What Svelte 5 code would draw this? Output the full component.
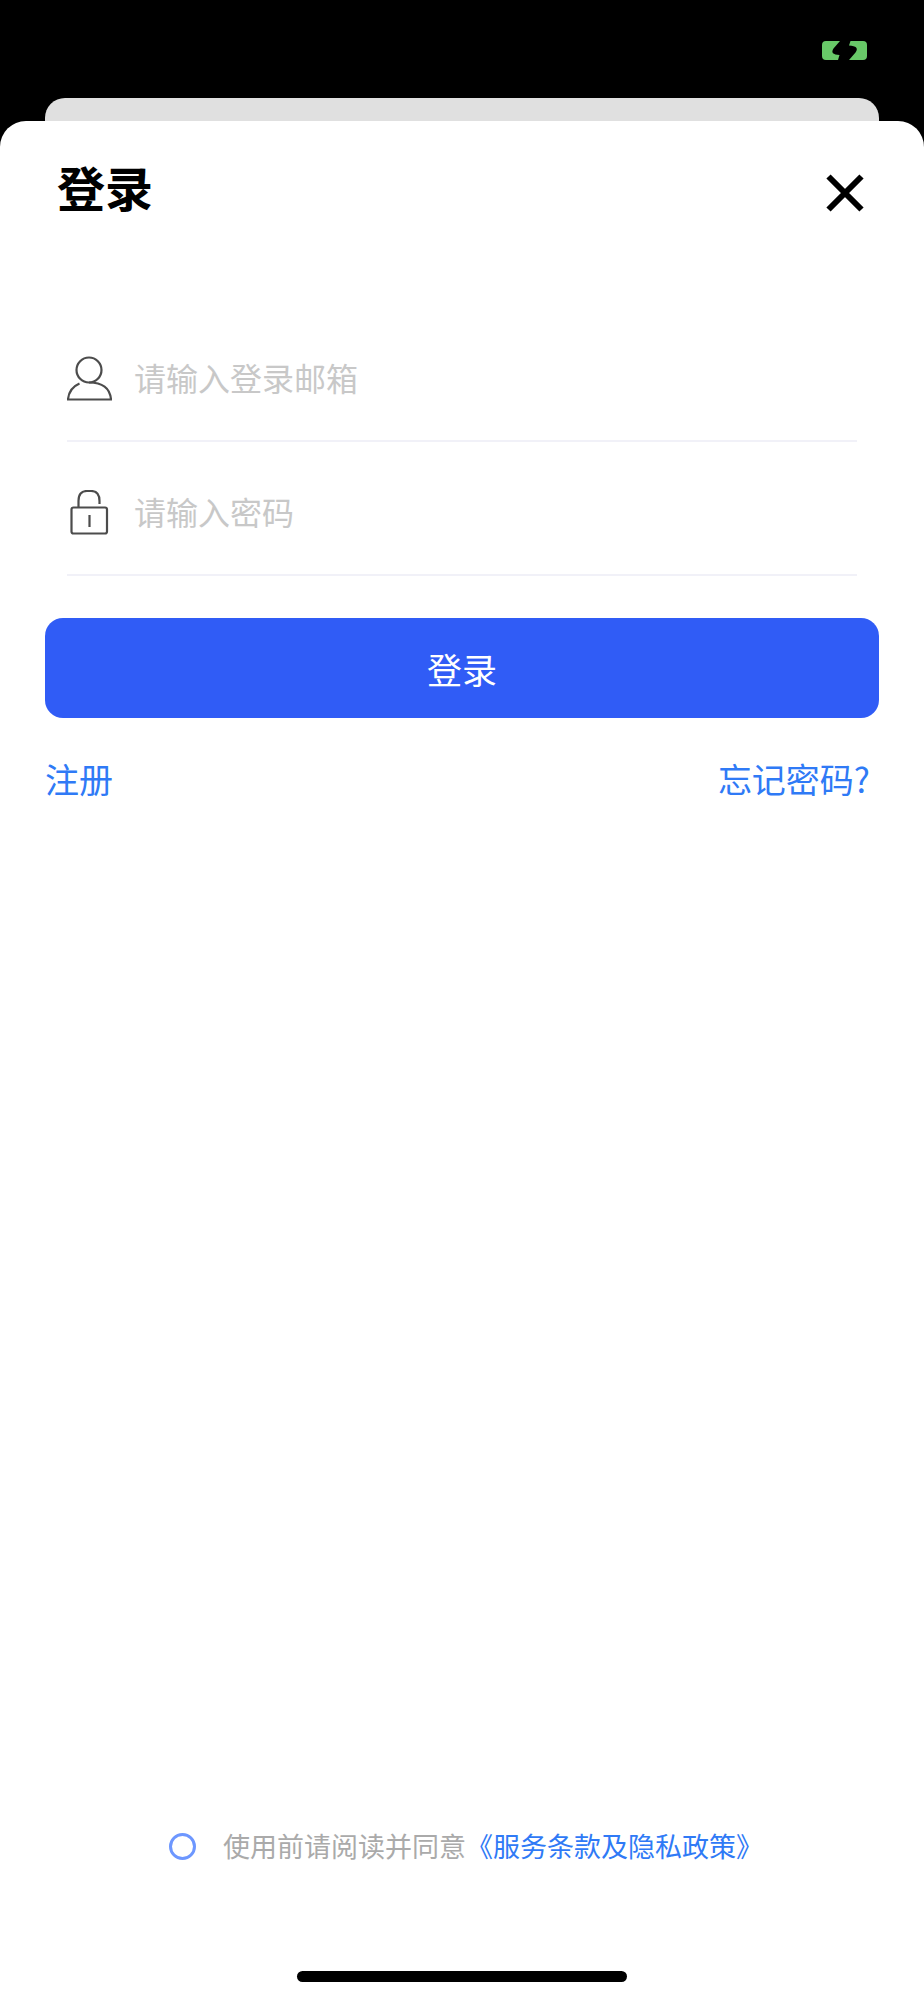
<!-- src/Login.svelte -->

<script>
  let email = '';
  let password = '';
  let agreed = false;

  function handleLogin() {
    if (!agreed) return;
    password = '';
  }
</script>

<div class="screen">
  <div class="status-bar">
    <!-- charging battery -->
    <svg class="battery" viewBox="0 0 45 19" aria-hidden="true">
      <path d="M4 0H18L11.500 7.500Q7.500 13.500 17.500 14L16 19H4Q0 19 0 15V4Q0 0 4 0Z" />
      <path d="M28.500 0H41Q45 0 45 4V15Q45 19 41 19H27L33.500 11.500Q38 5 27 4.500Z" />
    </svg>
  </div>

  <div class="back-sheet"></div>

  <main class="sheet">
    <header>
      <h1>登录</h1>
      <button class="close" type="button" aria-label="关闭">
        <svg viewBox="0 0 38 38" aria-hidden="true">
          <path d="M2.500 2.500L35.500 35.500M35.500 2.500L2.500 35.500" />
        </svg>
      </button>
    </header>

    <form on:submit|preventDefault={handleLogin}>
      <div class="field">
        <label for="email" aria-label="登录邮箱">
          <svg viewBox="0 0 45 45" aria-hidden="true">
            <circle cx="22" cy="14" r="12.500" />
            <path d="M12.500 27.500Q2 32 1 43.500H44C43 32 35 26.500 22 26.500" />
          </svg>
        </label>
        <input id="email" type="email" placeholder="请输入登录邮箱" bind:value={email} />
      </div>

      <div class="field">
        <label for="password" aria-label="密码">
          <svg viewBox="0 0 45 45" aria-hidden="true">
            <rect x="4.500" y="17.500" width="35.500" height="26" rx="2" />
            <path d="M11.500 17.500V11Q11.500 1 20 1H24Q32.500 1 32.500 11V14M22.500 25V37" />
          </svg>
        </label>
        <input id="password" type="password" placeholder="请输入密码" bind:value={password} />
      </div>

      <button class="submit" type="submit">登录</button>
    </form>

    <nav>
      <a href="#register">注册</a>
      <a href="#forgot">忘记密码?</a>
    </nav>

    <footer>
      <div class="agreement">
        <input id="agree" type="checkbox" bind:checked={agreed} />
        <p><label for="agree">使用前请阅读并同意</label><a href="#terms">《服务条款及隐私政策》</a></p>
      </div>
      <div class="home-bar"></div>
    </footer>
  </main>
</div>

<style>
  :global(body) {
    background: #000;
  }

  .screen {
    display: flex;
    flex-direction: column;
    min-height: 100vh;
    background: #000;
    font-family: "Noto Sans CJK SC", sans-serif;
  }

  .status-bar {
    display: flex;
    justify-content: flex-end;
    height: 98px;
    padding: 41px 57px 0;
    box-sizing: border-box;
  }

  .battery {
    width: 45px;
    height: 19px;
    fill: #68c968;
  }

  .back-sheet {
    height: 23px;
    margin: 0 45px;
    background: #e0e0e0;
    border-radius: 20px 20px 0 0;
  }

  .sheet {
    flex: 1;
    display: flex;
    flex-direction: column;
    background: #fff;
    border-radius: 26px 26px 0 0;
  }

  header {
    display: flex;
    justify-content: space-between;
    align-items: center;
    padding: 29px 57px 0;
  }

  h1 {
    margin: 0;
    font-size: 48px;
    line-height: 72px;
    font-weight: 700;
    color: #000;
  }

  button {
    border: none;
    font-family: inherit;
    cursor: pointer;
  }

  .close {
    display: flex;
    padding: 14px 0 0;
    background: none;
  }

  .close svg {
    width: 44px;
    height: 38px;
    fill: none;
    stroke: #000;
    stroke-width: 6;
  }

  form {
    padding: 86px 45px 0;
  }

  .field {
    display: flex;
    align-items: center;
    gap: 22px;
    height: 134px;
    margin: 0 22px;
    padding-top: 8px;
    box-sizing: border-box;
    border-bottom: 2px solid #f1f1f8;
  }

  .field label {
    display: flex;
  }

  .field svg {
    width: 45px;
    height: 45px;
    fill: none;
    stroke: #4c4c4c;
    stroke-width: 2.2;
  }

  .field input {
    flex: 1;
    min-width: 0;
    padding: 0 0 2px;
    border: none;
    outline: none;
    background: none;
    font-family: inherit;
    font-size: 32px;
    line-height: 48px;
    color: #333;
  }

  .field input::placeholder {
    color: #c8c8c8;
    opacity: 1;
  }

  .submit {
    width: 100%;
    height: 100px;
    margin-top: 42px;
    padding: 0;
    border-radius: 18px;
    background: #305cf6;
    color: #fff;
    font-size: 35px;
  }

  nav {
    display: flex;
    justify-content: space-between;
    padding: 36px 54px 0 45px;
    font-size: 34px;
    line-height: 50px;
  }

  a {
    color: #2f7af6;
    text-decoration: none;
  }

  footer {
    display: flex;
    flex-direction: column;
    align-items: center;
    margin-top: auto;
    padding-bottom: 18px;
  }

  .agreement {
    display: flex;
    align-items: center;
    gap: 27px;
    padding-left: 8px;
    font-size: 27px;
    line-height: 40px;
    color: #aaa;
  }

  .agreement p {
    margin: 0;
  }

  .agreement input {
    appearance: none;
    width: 27px;
    height: 27px;
    margin: 0;
    border: 3px solid #6d97ff;
    border-radius: 50%;
  }

  .agreement input:checked {
    background: #305cf6;
  }

  .home-bar {
    width: 330px;
    height: 11px;
    margin-top: 105px;
    border-radius: 6px;
    background: #000;
  }
</style>
